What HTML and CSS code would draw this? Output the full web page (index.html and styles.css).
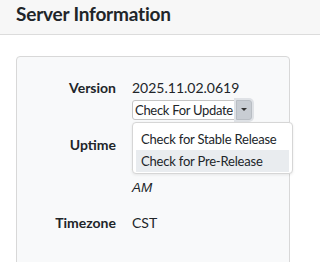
FILE: index.html
```html
<!DOCTYPE html>
<html lang="en">
<head>
  <meta charset="UTF-8" />
  <title>Server Information</title>
  <link rel="stylesheet" href="styles.css">
</head>
<body>

  <!-- Header -->
  <div class="page-header">
    <h1>Server Information</h1>
  </div>

  <!-- Info card -->
  <div class="card">
    <div class="info-grid">
      <div class="label">Version</div>
      <div class="value">
        <div>2025.11.02.0619</div>
        <div class="split-btn">
          <button class="btn-main">Check For Update</button>
          <button class="btn-caret"><span class="caret"></span></button>
          <ul class="menu">
            <li>Check for Stable Release</li>
            <li class="active">Check for Pre-Release</li>
          </ul>
        </div>
      </div>

      <div class="label">Uptime</div>
      <div class="value uptime">2 days, 4 hours<br><em>11/2/2025 6:19:00</em><br><em>AM</em></div>

      <div class="label">Timezone</div>
      <div class="value">CST</div>
    </div>
  </div>

</body>
</html>
```

FILE: styles.css
```css
body {
  margin: 0;
  font-family: Lato, "Noto Sans", sans-serif;
  font-size: 14px;
  color: #212529;
  background: #fff;
}

.page-header {
  height: 34px;
  background-color: #f7f7f7;
  border-bottom: 1px solid #dcdcdc;
  padding: 0 16px;
}

.page-header h1 {
  margin: 0;
  font-size: 19px;
  font-weight: 700;
  line-height: 28px;
  letter-spacing: -0.2px;
  color: #212529;
}

.card {
  margin: 21px 30px 0 16px;
  height: 220px;
  background-color: #f8f9fa;
  border: 1px solid #d8d8d8;
  border-radius: 4px;
  padding: 21px 16px 0 16px;
}

.info-grid {
  display: grid;
  grid-template-columns: 83px 1fr;
  column-gap: 16px;
  row-gap: 15px;
  line-height: 20.5px;
}

.label {
  font-weight: 700;
  text-align: right;
}

.value em {
  font-family: "Liberation Sans", sans-serif;
  font-style: italic;
  font-size: 13.5px;
}

.split-btn {
  position: relative;
  display: flex;
  margin-top: 1px;
}

.split-btn button {
  font-family: inherit;
  font-size: 13px;
  letter-spacing: -0.3px;
  color: #212529;
  height: 20px;
  line-height: 18px;
  border: 1px solid #c6c6c6;
  background: #fff;
  padding: 0 2px;
  margin: 0;
}

.btn-main {
  border-radius: 3px 0 0 3px;
  white-space: nowrap;
}

.btn-caret {
  width: 16px;
  background: #c8cdd3 !important;
  border-color: #b9bec4 !important;
  border-radius: 0 3px 3px 0;
  box-shadow: 0 0 0 2px #dfe2e6;
  display: flex;
  align-items: center;
  justify-content: center;
}

.caret {
  width: 0;
  height: 0;
  border-left: 3px solid transparent;
  border-right: 3px solid transparent;
  border-top: 3px solid #333;
}

.menu {
  position: absolute;
  top: 22px;
  left: 0;
  width: 159px;
  margin: 0;
  padding: 5px 0 1px 0;
  list-style: none;
  background: #fff;
  border: 1px solid #d6d6d6;
  border-radius: 4px;
  box-shadow: 0 1px 3px rgba(0, 0, 0, 0.08);
  z-index: 10;
}

.menu li {
  font-size: 13px;
  letter-spacing: -0.2px;
  padding: 0 8px;
  line-height: 22px;
  white-space: nowrap;
}

.menu li.active {
  background-color: #e9ecef;
  margin: 0 3px;
  padding: 0 5px;
}
```
